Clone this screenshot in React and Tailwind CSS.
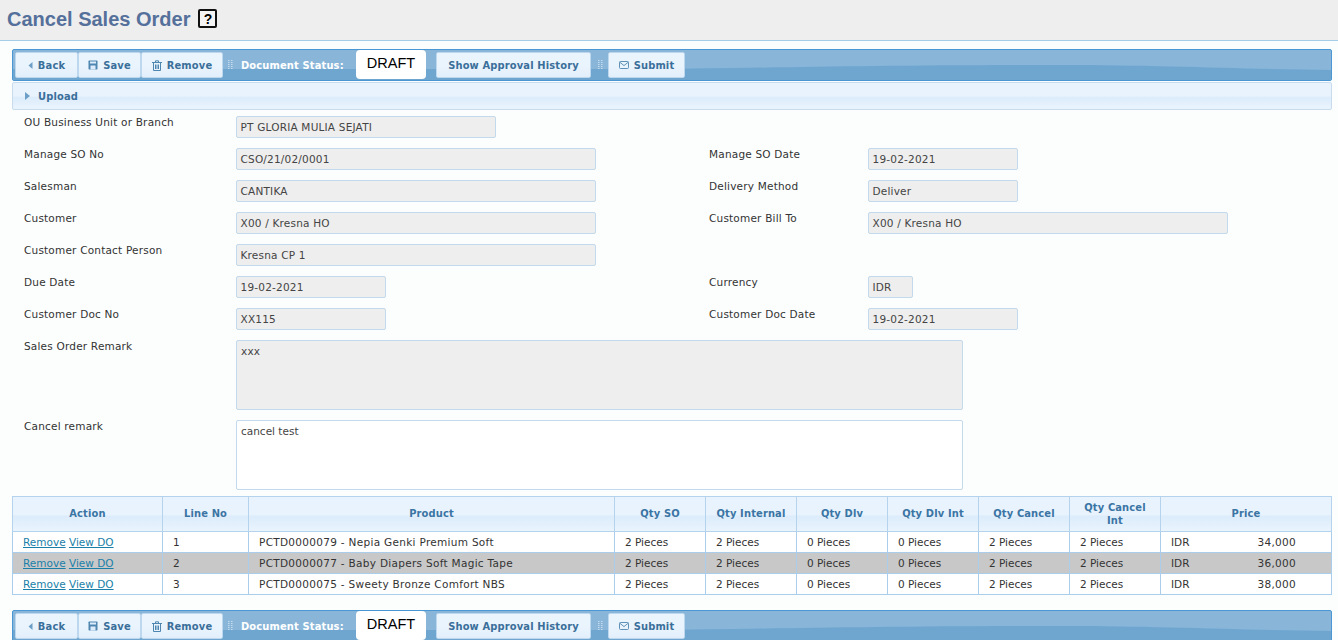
import React from "react";

const font = "font-['DejaVu_Sans',sans-serif]";
const bold = "font-['DejaVu_Sans_Condensed','DejaVu_Sans',sans-serif] font-bold";

function ArrowLeft() {
  return <svg width="5" height="7" viewBox="0 0 5 7"><path d="M4.5 0 L0.5 3.5 L4.5 7Z" fill="#6d9fc6" /></svg>;
}
function SaveIcon() {
  return (
    <svg width="10" height="10" viewBox="0 0 10 10">
      <path d="M0.5 1.2 Q0.5 .5 1.2 .5 H8.8 Q9.5 .5 9.5 1.2 V8.8 Q9.5 9.5 8.8 9.5 H1.2 Q.5 9.5 .5 8.8Z" fill="#4f86b0" />
      <rect x="2" y="1.5" width="6" height="2" fill="#dcecfb" />
      <rect x="2.5" y="5.5" width="5" height="4" fill="#dcecfb" />
    </svg>
  );
}
function TrashIcon() {
  return (
    <svg width="10" height="11" viewBox="0 0 10 11" fill="none" stroke="#4f86b0" strokeWidth="1">
      <path d="M0 2.5 H10 M3.5 2.5 V.8 H6.5 V2.5 M1.5 2.5 V10.5 H8.5 V2.5 M3.5 4.5 V9 M5 4.5 V9 M6.5 4.5 V9" />
    </svg>
  );
}
function MailIcon() {
  return (
    <svg width="10" height="8" viewBox="0 0 10 8" fill="none" stroke="#4f86b0" strokeWidth="0.9">
      <rect x=".5" y=".5" width="9" height="7" rx="1" />
      <path d="M.8 1.2 L5 4.6 L9.2 1.2" />
    </svg>
  );
}
function Grip() {
  return (
    <svg width="5" height="10" viewBox="0 0 5 10" fill="#c6dcee">
      {[0, 2, 4, 6, 8].map((y) => (
        <g key={y}>
          <rect x="0" y={y} width="1.5" height="1" />
          <rect x="3" y={y} width="1.5" height="1" />
        </g>
      ))}
    </svg>
  );
}

function Btn({ w, icon, children }) {
  return (
    <div
      className={`${w} h-[26px] flex items-center justify-center gap-[5px] rounded-[2px] border border-[#bdd7ee] bg-gradient-to-b from-[#eaf4fd] from-50% to-[#e2effb] text-[11px] ${bold} tracking-[0.15px] text-[#3a6f9a]`}
    >
      {icon}
      <span className="pt-[2px]">{children}</span>
    </div>
  );
}

function Toolbar() {
  return (
    <div className="relative h-[32px] border border-[#4a97d3] rounded-[2px] bg-[#88b5d8] overflow-hidden flex items-center pl-[2px] shrink-0">
      <svg className="absolute inset-0 w-full h-full" viewBox="0 0 1320 30" preserveAspectRatio="none">
        <path d="M0 19 C200 19 400 19 640 19 C760 18 860 15 1050 15 C1150 15 1220 19 1320 20 V30 H0Z" fill="#6ea6d0" />
      </svg>
      <div className="relative flex items-center w-full">
        <Btn w="w-[63px]" icon={<ArrowLeft />}>Back</Btn>
        <Btn w="w-[63px]" icon={<SaveIcon />}>Save</Btn>
        <Btn w="w-[82px]" icon={<TrashIcon />}>Remove</Btn>
        <span className="ml-[5px]"><Grip /></span>
        <span className={`ml-[8px] w-[115px] pt-[2px] whitespace-nowrap text-[11px] ${bold} tracking-[0.15px] text-white`}>Document Status:</span>
        <div className="w-[70px] h-[29px] -mt-[2px] rounded-[4px] bg-white flex items-center justify-center font-['Liberation_Sans',sans-serif] text-[14.5px] text-black">DRAFT</div>
        <div className="w-[10px]" />
        <Btn w="w-[155px]">Show Approval History</Btn>
        <span className="ml-[7px] mr-[5px]"><Grip /></span>
        <Btn w="w-[77px]" icon={<MailIcon />}>Submit</Btn>
      </div>
    </div>
  );
}

function Field({ w, children }) {
  return (
    <div className={`${w} h-[22px] rounded-[2px] border border-[#c3d9ec] bg-[#eeeeee] px-[3.5px] flex items-center text-[10.5px] tracking-[0.2px] leading-none text-[#444] whitespace-nowrap`}>
      {children}
    </div>
  );
}

const labelCls = "text-[10.5px] leading-[12px] tracking-[0.2px] text-[#333]";

function Row({ label, value, w, label2, value2, w2 }) {
  return (
    <div className="h-[32px] flex">
      <div className={`w-[212px] ${labelCls}`}>{label}</div>
      <div className="w-[473px]"><Field w={w}>{value}</Field></div>
      {label2 && (
        <>
          <div className={`w-[159px] ${labelCls}`}>{label2}</div>
          <Field w={w2}>{value2}</Field>
        </>
      )}
    </div>
  );
}

const rows = [
  ["1", "PCTD0000079 - Nepia Genki Premium Soft", "34,000", "bg-white"],
  ["2", "PCTD0000077 - Baby Diapers Soft Magic Tape", "36,000", "bg-[#c8c8c8]"],
  ["3", "PCTD0000075 - Sweety Bronze Comfort NBS", "38,000", "bg-white"],
];
const heads = ["Action", "Line No", "Product", "Qty SO", "Qty Internal", "Qty Dlv", "Qty Dlv Int", "Qty Cancel", "Qty Cancel Int", "Price"];
const widths = ["w-[150px]", "w-[86px]", "w-[366px]", "w-[91px]", "w-[91px]", "w-[91px]", "w-[91px]", "w-[91px]", "w-[91px]", "w-[171px]"];
const th = `border border-[#b5d3ec] px-[6px] pb-[1px] text-center text-[11px] ${bold} tracking-[0.15px] leading-[13px] text-[#3a75a4]`;
const td = "border border-[#a9cdea] px-[10px] pt-[1px] text-[10.5px] text-[#333] whitespace-nowrap";

export default function App() {
  return (
    <div className={`h-[640px] overflow-hidden bg-[#fcfefe] flex flex-col ${font}`}>
      <header className="h-[41px] shrink-0 bg-[#eeeeee] border-b border-[#a6cde8] flex items-center pl-[7px] pb-[3px]">
        <h1 className="font-['Liberation_Sans',sans-serif] text-[20px] font-bold text-[#55709b]">Cancel Sales Order</h1>
        <div className="ml-[8px] w-[19px] h-[19px] rounded-[2px] border-[2px] border-[#111] bg-[#f4f4f4] flex items-center justify-center font-['Liberation_Sans',sans-serif] text-[14px] font-bold leading-none text-black">?</div>
      </header>

      <main className="px-[12px] pr-[6px] pt-[8px] flex flex-col flex-1">
        <Toolbar />
        <div className={`mt-[1px] h-[28px] shrink-0 rounded-[2px] border border-[#c8dcee] bg-gradient-to-b from-[#e9f3fd] from-50% via-[#dcecfb] via-55% to-[#eaf4fd] flex items-center pl-[12px] gap-[8px] text-[11px] ${bold} tracking-[0.15px] text-[#3a6f9a]`}>
          <svg width="5" height="8" viewBox="0 0 5 8"><path d="M0 0 L5 4 L0 8Z" fill="#6d9fc6" /></svg>
          <span className="pt-[2px]">Upload</span>
        </div>

        <section className="pl-[12px] pt-[6px]">
          <Row label="OU Business Unit or Branch" value="PT GLORIA MULIA SEJATI" w="w-[260px]" />
          <Row label="Manage SO No" value="CSO/21/02/0001" w="w-[360px]" label2="Manage SO Date" value2="19-02-2021" w2="w-[150px]" />
          <Row label="Salesman" value="CANTIKA" w="w-[360px]" label2="Delivery Method" value2="Deliver" w2="w-[150px]" />
          <Row label="Customer" value="X00 / Kresna HO" w="w-[360px]" label2="Customer Bill To" value2="X00 / Kresna HO" w2="w-[360px]" />
          <Row label="Customer Contact Person" value="Kresna CP 1" w="w-[360px]" />
          <Row label="Due Date" value="19-02-2021" w="w-[150px]" label2="Currency" value2="IDR" w2="w-[45px]" />
          <Row label="Customer Doc No" value="XX115" w="w-[150px]" label2="Customer Doc Date" value2="19-02-2021" w2="w-[150px]" />
          <div className="h-[80px] flex">
            <div className={`w-[212px] ${labelCls}`}>Sales Order Remark</div>
            <div className="w-[727px] h-[70px] rounded-[2px] border border-[#c3d9ec] bg-[#eeeeee] px-[4px] pt-[3px] text-[10.5px] tracking-[0.2px] text-[#444]">xxx</div>
          </div>
          <div className="h-[76px] flex">
            <div className={`w-[212px] ${labelCls}`}>Cancel remark</div>
            <div className="w-[727px] h-[70px] rounded-[2px] border border-[#c3d9ec] bg-white px-[4px] pt-[3px] text-[10.5px] text-[#444]">cancel test</div>
          </div>
        </section>

        <table className="table-fixed w-[1319px] border-collapse shrink-0">
          <thead>
            <tr className="h-[35px] bg-gradient-to-b from-[#e9f3fd] from-50% via-[#dcecfb] via-55% to-[#eaf4fd]">
              {heads.map((h, i) => (
                <th key={h} className={`${th} ${widths[i]}`}>{h}</th>
              ))}
            </tr>
          </thead>
          <tbody>
            {rows.map(([n, p, price, bg]) => (
              <tr key={n} className={`h-[21px] ${bg}`}>
                <td className={`${td} pl-[10px] pr-0`}>
                  <a className="text-[#1a7fa8] underline" href="#">Remove</a>{" "}
                  <a className="text-[#1a7fa8] underline" href="#">View DO</a>
                </td>
                <td className={td}>{n}</td>
                <td className={`${td} tracking-[0.3px]`}>{p}</td>
                <td className={td}>2 Pieces</td>
                <td className={td}>2 Pieces</td>
                <td className={td}>0 Pieces</td>
                <td className={td}>0 Pieces</td>
                <td className={td}>2 Pieces</td>
                <td className={td}>2 Pieces</td>
                <td className={td}>
                  <div className="flex justify-between pr-[25px]"><span>IDR</span><span className="tracking-[0.3px]">{price}</span></div>
                </td>
              </tr>
            ))}
          </tbody>
        </table>

        <div className="mt-[15px]"><Toolbar /></div>
      </main>
    </div>
  );
}
